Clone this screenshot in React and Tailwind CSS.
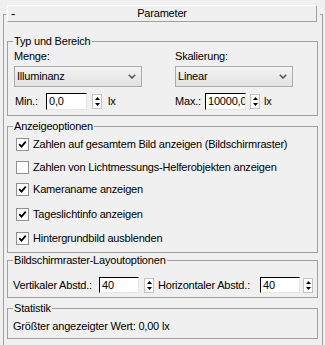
import React from "react";

const Spinner = ({ className = "" }) => (
  <div className={`w-[10px] h-[15px] bg-white border border-[#c4c4c4] flex flex-col items-center justify-center gap-[3px] ${className}`}>
    <svg width="5" height="3" viewBox="0 0 5 3"><path d="M2.5 0 L5 3 L0 3Z" fill="#000" /></svg>
    <svg width="5" height="3" viewBox="0 0 5 3"><path d="M0 0 L5 0 L2.5 3Z" fill="#000" /></svg>
  </div>
);

const Field = ({ value, className = "" }) => (
  <div className={`bg-white border border-t-black border-l-black border-r-[#e6e6e6] border-b-[#e6e6e6] pl-[2px] overflow-hidden whitespace-nowrap flex items-center ${className}`}>
    {value}
  </div>
);

const Dropdown = ({ value, className = "" }) => (
  <div className={`h-[21px] border border-[#acacac] flex items-center justify-between bg-linear-to-b from-[#f3f3f3] to-[#e2e2e2] pl-[2px] pr-[5px] ${className}`}>
    <span>{value}</span>
    <svg width="8" height="5" viewBox="0 0 8 5">
      <path d="M0.8 0.8 L4 4 L7.2 0.8" fill="none" stroke="#555" strokeWidth="1.6" />
    </svg>
  </div>
);

const Check = ({ checked, label, className = "" }) => (
  <div className={`flex items-center gap-[4px] h-[13px] ${className}`}>
    <div className="w-[13px] h-[13px] bg-white border border-[#8e8f8f] flex items-center justify-center">
      {checked && (
        <svg width="9" height="9" viewBox="0 0 9 9">
          <path d="M1.2 4.2 L3.5 6.6 L7.8 1.6" fill="none" stroke="#000" strokeWidth="1.8" />
        </svg>
      )}
    </div>
    <span>{label}</span>
  </div>
);

const Group = ({ title, className = "", children }) => (
  <fieldset className={`border border-[#a0a0a0] ${className}`}>
    <legend className="ml-[5px] px-[1px] leading-[13px]">{title}</legend>
    {children}
  </fieldset>
);

export default function App() {
  return (
    <div className="w-[325px] h-[345px] overflow-hidden bg-[#f0f0f0] font-['Liberation_Sans',Arial,sans-serif] text-[11px] leading-[13px] tracking-[-0.2px] text-black pt-[14px] pl-[3px] pr-[2px]">
      <div className="h-[340px] border-t border-l border-r border-[#a0a0a0] pl-[3px] pr-[4px]">
        <div className="-mt-[11px] -ml-[1px] -mr-[2px] pt-[1px] pl-[1px] pr-[3px] bg-[#f0f0f0]">
          <div className="h-[17px] border border-t-white border-l-white border-r-[#a0a0a0] border-b-[#a0a0a0] grid grid-cols-[24px_1fr_24px] items-center">
            <span className="pl-[3px] text-[13px]">-</span>
            <span className="text-center">Parameter</span>
            <span />
          </div>
        </div>

        <Group title="Typ und Bereich" className="mt-[13px]">
          <div className="flex pt-[2px] pl-[6px] pb-[5px]">
            <div className="w-[161px]">
              <div>Menge:</div>
              <Dropdown value="Illuminanz" className="mt-[3px] w-[128px]" />
              <div className="mt-[6px] flex items-center h-[17px]">
                <span className="w-[32px] pl-[1px]">Min.:</span>
                <Field value="0,0" className="w-[41px] h-[17px]" />
                <Spinner className="ml-[5px]" />
                <span className="ml-[6px]">lx</span>
              </div>
            </div>
            <div>
              <div>Skalierung:</div>
              <Dropdown value="Linear" className="mt-[3px] w-[118px]" />
              <div className="mt-[6px] flex items-center h-[17px]">
                <span className="w-[30px]">Max.:</span>
                <Field value="10000,0" className="w-[41px] h-[17px]" />
                <Spinner className="ml-[4px]" />
                <span className="ml-[4px]">lx</span>
              </div>
            </div>
          </div>
        </Group>

        <Group title="Anzeigeoptionen" className="mt-[4px]">
          <div className="pl-[8px] pt-[5px] pb-[7px]">
            <Check checked label="Zahlen auf gesamtem Bild anzeigen (Bildschirmraster)" />
            <Check label="Zahlen von Lichtmessungs-Helferobjekten anzeigen" className="mt-[10px]" />
            <Check checked label="Kameraname anzeigen" className="mt-[9px]" />
            <Check checked label="Tageslichtinfo anzeigen" className="mt-[12px]" />
            <Check checked label="Hintergrundbild ausblenden" className="mt-[11px]" />
          </div>
        </Group>

        <Group title="Bildschirmraster-Layoutoptionen" className="mt-[1px]">
          <div className="flex items-center h-[16px] mt-[10px] mb-[4px] pl-[5px]">
            <span className="w-[86px]">Vertikaler Abstd.:</span>
            <Field value="40" className="w-[40px] h-[16px]" />
            <Spinner className="ml-[5px]" />
            <span className="ml-[4px] w-[102px]">Horizontaler Abstd.:</span>
            <Field value="40" className="w-[40px] h-[16px]" />
            <Spinner className="ml-[3px]" />
          </div>
        </Group>

        <Group title="Statistik" className="mt-[4px]">
          <div className="pl-[5px] pt-[5px] pb-[5px]">Größter angezeigter Wert: 0,00 lx</div>
        </Group>
      </div>
    </div>
  );
}
